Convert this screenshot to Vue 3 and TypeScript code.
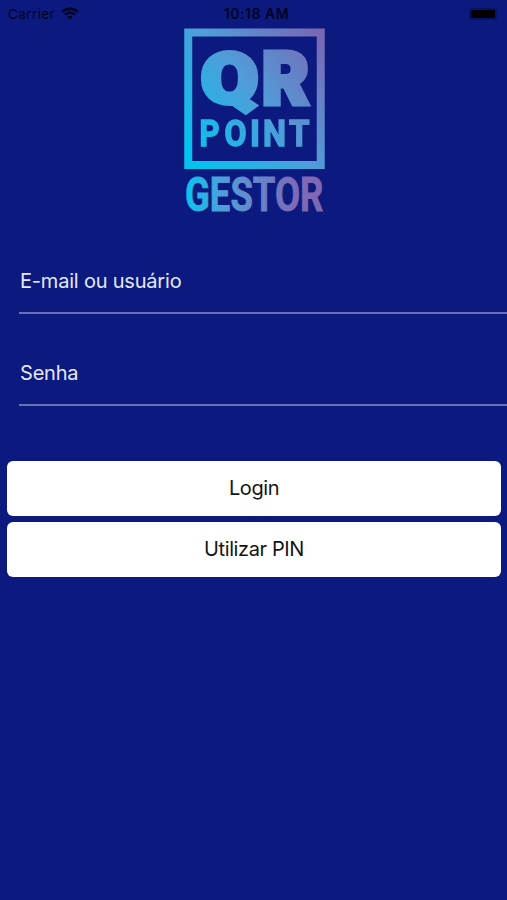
<script setup lang="ts">
import { ref } from 'vue'

interface Glyph {
  char: string
  x: number
  baseline: number
  size: number
  width: number
  stroke: number
  weight: number
}

const user = ref<string>('')
const password = ref<string>('')

const glyphs: Glyph[] = [
  { char: 'Q', x: 17, baseline: 75, size: 70, width: 57, stroke: 5, weight: 900 },
  { char: 'R', x: 78, baseline: 75.5, size: 73, width: 47, stroke: 5, weight: 900 },
  { char: 'P', x: 15.5, baseline: 118, size: 37.5, width: 20, stroke: 1.5, weight: 700 },
  { char: 'O', x: 40.5, baseline: 117.5, size: 36.5, width: 22, stroke: 1.5, weight: 700 },
  { char: 'I', x: 66, baseline: 118, size: 37.5, width: 10, stroke: 1.5, weight: 700 },
  { char: 'N', x: 79, baseline: 118, size: 37.5, width: 23, stroke: 1.5, weight: 700 },
  { char: 'T', x: 105, baseline: 118, size: 37.5, width: 20.5, stroke: 1.5, weight: 700 },
]
</script>

<template>
  <main class="screen">
    <header class="status">
      <div class="carrier">
        <span class="carrier-name">Carrier</span>
        <svg class="wifi" viewBox="0 0 18 13" width="18" height="13">
          <path d="M1.2 4.8C5.7.7 12.3.7 16.8 4.8" />
          <path d="M4 7.7C6.9 5.1 11.1 5.1 14 7.7" />
          <path class="dot" d="M6.3 9.8Q9 7.7 11.7 9.8L9 12.6Z" />
        </svg>
      </div>
      <span class="time">10:18 AM</span>
      <div class="battery"><span class="charge"></span></div>
    </header>

    <svg class="logo" viewBox="0 0 141 185" width="141" height="185" role="img" aria-label="QR Point Gestor">
      <defs>
        <linearGradient id="mark" gradientUnits="userSpaceOnUse" x1="4" y1="122" x2="141" y2="10">
          <stop offset="0" stop-color="#04c4ee" />
          <stop offset="0.5" stop-color="#519cd9" />
          <stop offset="1" stop-color="#7967b3" />
        </linearGradient>
        <linearGradient id="word" gradientUnits="userSpaceOnUse" x1="0" y1="0" x2="141" y2="0">
          <stop offset="0" stop-color="#08c5ef" />
          <stop offset="0.3" stop-color="#559bd8" />
          <stop offset="0.78" stop-color="#7b6bb8" />
          <stop offset="1" stop-color="#8067b2" />
        </linearGradient>
        <mask id="letters" maskUnits="userSpaceOnUse" x="0" y="0" width="141" height="185">
          <text
            v-for="g in glyphs"
            :key="g.char"
            class="block"
            :x="g.x"
            :y="g.baseline"
            :font-size="g.size"
            :font-weight="g.weight"
            :stroke-width="g.stroke"
            :textLength="g.width"
            lengthAdjust="spacingAndGlyphs"
          >{{ g.char }}</text>
        </mask>
      </defs>
      <rect x="4.25" y="4.5" width="132.5" height="132.5" fill="none" stroke="url(#mark)" stroke-width="8" />
      <rect width="141" height="141" fill="url(#mark)" mask="url(#letters)" />
      <text class="gestor" x="1" y="182.5" textLength="138.5" lengthAdjust="spacingAndGlyphs">GESTOR</text>
    </svg>

    <form class="form" @submit.prevent>
      <div class="fields">
        <input v-model="user" class="field" type="text" placeholder="E-mail ou usuário" />
        <input v-model="password" class="field" type="password" placeholder="Senha" />
      </div>
      <div class="actions">
        <button class="button" type="submit">Login</button>
        <button class="button" type="button">Utilizar PIN</button>
      </div>
    </form>
  </main>
</template>

<style>
body {
  margin: 0;
  background: #0c197f;
}
</style>

<style scoped>
.screen {
  box-sizing: border-box;
  height: 900px;
  overflow: hidden;
  background: #0c197f;
  font-family: Inter, "Liberation Sans", sans-serif;
  display: flex;
  flex-direction: column;
}
.status {
  height: 28px;
  box-sizing: border-box;
  padding: 0 8px 1px;
  display: grid;
  grid-template-columns: 1fr auto 1fr;
  align-items: center;
  color: #02051f;
  font-size: 13.5px;
}
.carrier {
  display: flex;
  align-items: center;
  gap: 6px;
}
.carrier-name {
  letter-spacing: 0.4px;
}
.wifi {
  fill: none;
  stroke: #02051f;
  stroke-width: 2.3;
}
.wifi .dot {
  fill: #02051f;
  stroke: none;
}
.time {
  font-size: 14px;
  font-weight: 600;
  letter-spacing: 0.5px;
  padding-left: 6px;
}
.battery {
  justify-self: end;
  display: flex;
  align-items: center;
  box-sizing: border-box;
  width: 28px;
  height: 12px;
  padding: 2px;
  margin-right: 2px;
  border-radius: 3px;
  background: #091365;
}
.charge {
  width: 24px;
  height: 8px;
  border-radius: 1px;
  background: #000004;
}
.logo {
  display: block;
  margin-left: 184px;
  flex: none;
  overflow: visible;
}
.block {
  font-family: Roboto, sans-serif;
  fill: #fff;
  stroke: #fff;
  stroke-linejoin: miter;
}
.gestor {
  font-family: Roboto, sans-serif;
  font-size: 47.5px;
  font-weight: 700;
  fill: url(#word);
  stroke: url(#word);
  stroke-width: 0.8;
}
.form {
  display: flex;
  flex-direction: column;
}
.fields {
  padding: 37px 0 0 19px;
  display: flex;
  flex-direction: column;
  gap: 28px;
}
.field {
  appearance: none;
  box-sizing: border-box;
  width: 100%;
  height: 64px;
  margin: 0;
  padding: 0 0 1px 1px;
  border: 0;
  border-bottom: 2px solid #6871b3;
  border-radius: 0;
  outline: 0;
  background: transparent;
  color: #e3e8fb;
  font: 400 20px/24px Inter, sans-serif;
  letter-spacing: -0.2px;
}
.field::placeholder {
  color: #e3e8fb;
  opacity: 1;
}
.actions {
  padding: 54.5px 6px 0 7px;
  display: flex;
  flex-direction: column;
  gap: 6px;
}
.button {
  height: 55px;
  padding: 0 0 1px;
  border: 0;
  border-radius: 6px;
  background: #fff;
  color: #151515;
  font: 400 20px/24px Inter, sans-serif;
  letter-spacing: -0.4px;
}
</style>
